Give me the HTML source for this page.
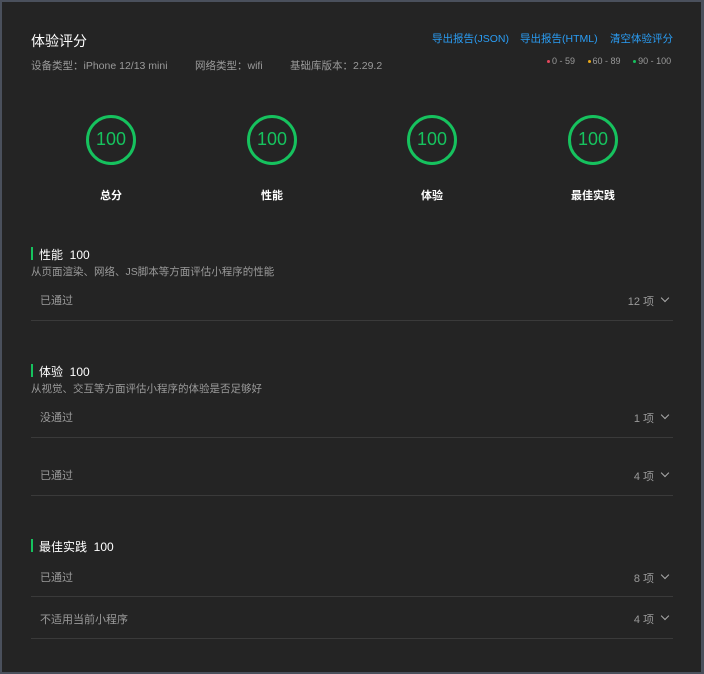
<!DOCTYPE html>
<html><head><meta charset="utf-8"><style>
*{margin:0;padding:0;box-sizing:border-box}
body{width:704px;height:674px;background:#4a505c;font-family:"Liberation Sans","Noto Sans CJK SC",sans-serif;overflow:hidden;position:relative}
.frame{position:absolute;left:2px;top:2px;width:699px;height:670px;background:#242424}
.a{position:absolute;white-space:nowrap}
.t{color:#fff}
.g{color:#9a9a9a}
.link{color:#2a9df4;font-size:10.5px;top:31px}
.circ{position:absolute;width:50px;height:50px;border:3.5px solid #16c25e;border-radius:50%;top:115px;color:#16c25e;font-size:18px;text-align:center;line-height:43px}
.lbl{position:absolute;top:187px;color:#fff;font-size:11px;width:60px;text-align:center;font-weight:bold}
.bar{position:absolute;left:31px;width:2px;height:13px;background:#16c25e}
.line{position:absolute;left:31px;width:642px;height:1px;background:#3a3a3a}
.row{position:absolute;left:40px;color:#9a9a9a;font-size:11px}
.cnt{position:absolute;right:50px;color:#9a9a9a;font-size:11px}
.chev{position:absolute;left:662px;width:6px;height:6px;border-right:1.2px solid #aaa;border-bottom:1.2px solid #aaa;transform:rotate(45deg)}
.dot{display:inline-block;width:3px;height:3px;border-radius:50%;margin-right:2px;vertical-align:middle}
</style></head><body><div class="frame"></div>
<div class="a t" style="left:31px;top:31px;font-size:14px">体验评分</div>
<div class="a g" style="left:31px;top:58px;font-size:10.5px">设备类型：iPhone 12/13 mini</div>
<div class="a g" style="left:195px;top:58px;font-size:10.5px">网络类型：wifi</div>
<div class="a g" style="left:290px;top:58px;font-size:10.5px">基础库版本：2.29.2</div>
<div class="a link" style="left:432px">导出报告(JSON)</div>
<div class="a link" style="left:520px">导出报告(HTML)</div>
<div class="a link" style="left:610px">清空体验评分</div>
<div class="a g" style="left:547px;top:56px;font-size:9px"><span class="dot" style="background:#e5475c"></span>0 - 59 &nbsp;&nbsp;&nbsp;&nbsp;<span class="dot" style="background:#e9a818"></span>60 - 89 &nbsp;&nbsp;&nbsp;&nbsp;<span class="dot" style="background:#16c25e"></span>90 - 100</div>
<div class="circ" style="left:86px">100</div>
<div class="circ" style="left:247px">100</div>
<div class="circ" style="left:407px">100</div>
<div class="circ" style="left:568px">100</div>
<div class="lbl" style="left:81px">总分</div>
<div class="lbl" style="left:242px">性能</div>
<div class="lbl" style="left:402px">体验</div>
<div class="lbl" style="left:563px">最佳实践</div>

<div class="bar" style="top:247px"></div>
<div class="a t" style="left:39px;top:246px;font-size:12px">性能&nbsp; 100</div>
<div class="a g" style="left:31px;top:264px;font-size:10.5px">从页面渲染、网络、JS脚本等方面评估小程序的性能</div>
<div class="row" style="top:292px">已通过</div><div class="cnt" style="top:293px">12 项</div><div class="chev" style="top:295px"></div>
<div class="line" style="top:320px"></div>

<div class="bar" style="top:364px"></div>
<div class="a t" style="left:39px;top:363px;font-size:12px">体验&nbsp; 100</div>
<div class="a g" style="left:31px;top:381px;font-size:10.5px">从视觉、交互等方面评估小程序的体验是否足够好</div>
<div class="row" style="top:409px">没通过</div><div class="cnt" style="top:410px">1 项</div><div class="chev" style="top:412px"></div>
<div class="line" style="top:437px"></div>
<div class="row" style="top:467px">已通过</div><div class="cnt" style="top:468px">4 项</div><div class="chev" style="top:470px"></div>
<div class="line" style="top:495px"></div>

<div class="bar" style="top:539px"></div>
<div class="a t" style="left:39px;top:538px;font-size:12px">最佳实践&nbsp; 100</div>
<div class="row" style="top:569px">已通过</div><div class="cnt" style="top:570px">8 项</div><div class="chev" style="top:572px"></div>
<div class="line" style="top:596px"></div>
<div class="row" style="top:611px">不适用当前小程序</div><div class="cnt" style="top:611px">4 项</div><div class="chev" style="top:613px"></div>
<div class="line" style="top:638px"></div>
</body></html>
